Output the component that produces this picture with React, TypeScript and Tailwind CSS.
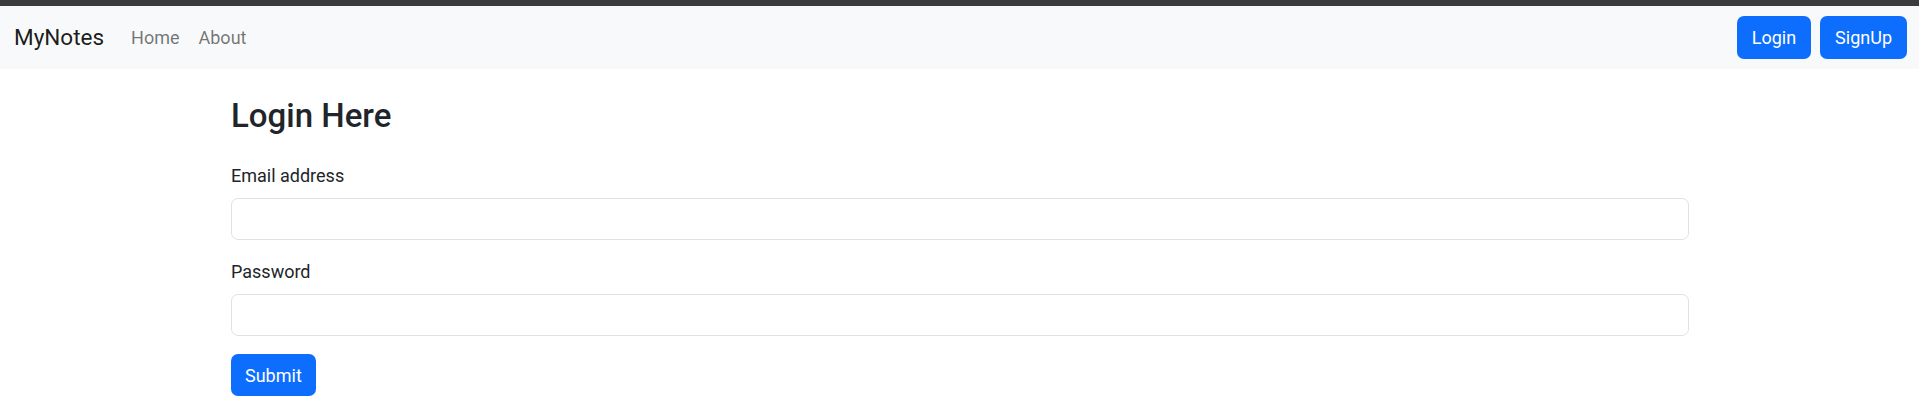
import React from "react";

const font = { fontFamily: 'Roboto, "Noto Sans", sans-serif' };

function Navbar() {
  return (
    <nav className="h-[63px] bg-[#f8f9fa] flex items-center justify-between pl-[14px] pr-[12px]">
      <div className="flex items-center">
        <a className="text-[22.5px] text-black/90 mr-[27px]">MyNotes</a>
        <ul className="flex items-center gap-[19px] text-[18px] text-black/55">
          <li>Home</li>
          <li>About</li>
        </ul>
      </div>
      <div className="flex items-center gap-[9px]">
        <button className="h-[43px] px-[15px] rounded-[7px] bg-[#0d6efd] text-white text-[18px]">Login</button>
        <button className="h-[43px] px-[15px] rounded-[7px] bg-[#0d6efd] text-white text-[18px]">SignUp</button>
      </div>
    </nav>
  );
}

function Field({ label, type }: { label: string; type: string }) {
  return (
    <div className="mb-[18px]">
      <label className="block text-[18px] leading-[27px] mb-[9px] text-[#212529]">{label}</label>
      <input
        type={type}
        className="block w-full h-[42px] rounded-[7px] border border-[#dee2e6] bg-white px-[13px] outline-none"
      />
    </div>
  );
}

export default function App() {
  return (
    <div style={font} className="min-h-[405px] bg-white text-[#212529]">
      <div className="h-[6px] bg-[#3b3b3b]" />
      <Navbar />
      <div className="w-[1458px] ml-[231px] mt-[25px]">
        <h2 className="text-[33px] font-medium leading-[43px] mb-[25px]">Login Here</h2>
        <form>
          <Field label="Email address" type="email" />
          <Field label="Password" type="password" />
          <button className="h-[42px] px-[14px] rounded-[7px] bg-[#0d6efd] text-white text-[18px]">Submit</button>
        </form>
      </div>
    </div>
  );
}
